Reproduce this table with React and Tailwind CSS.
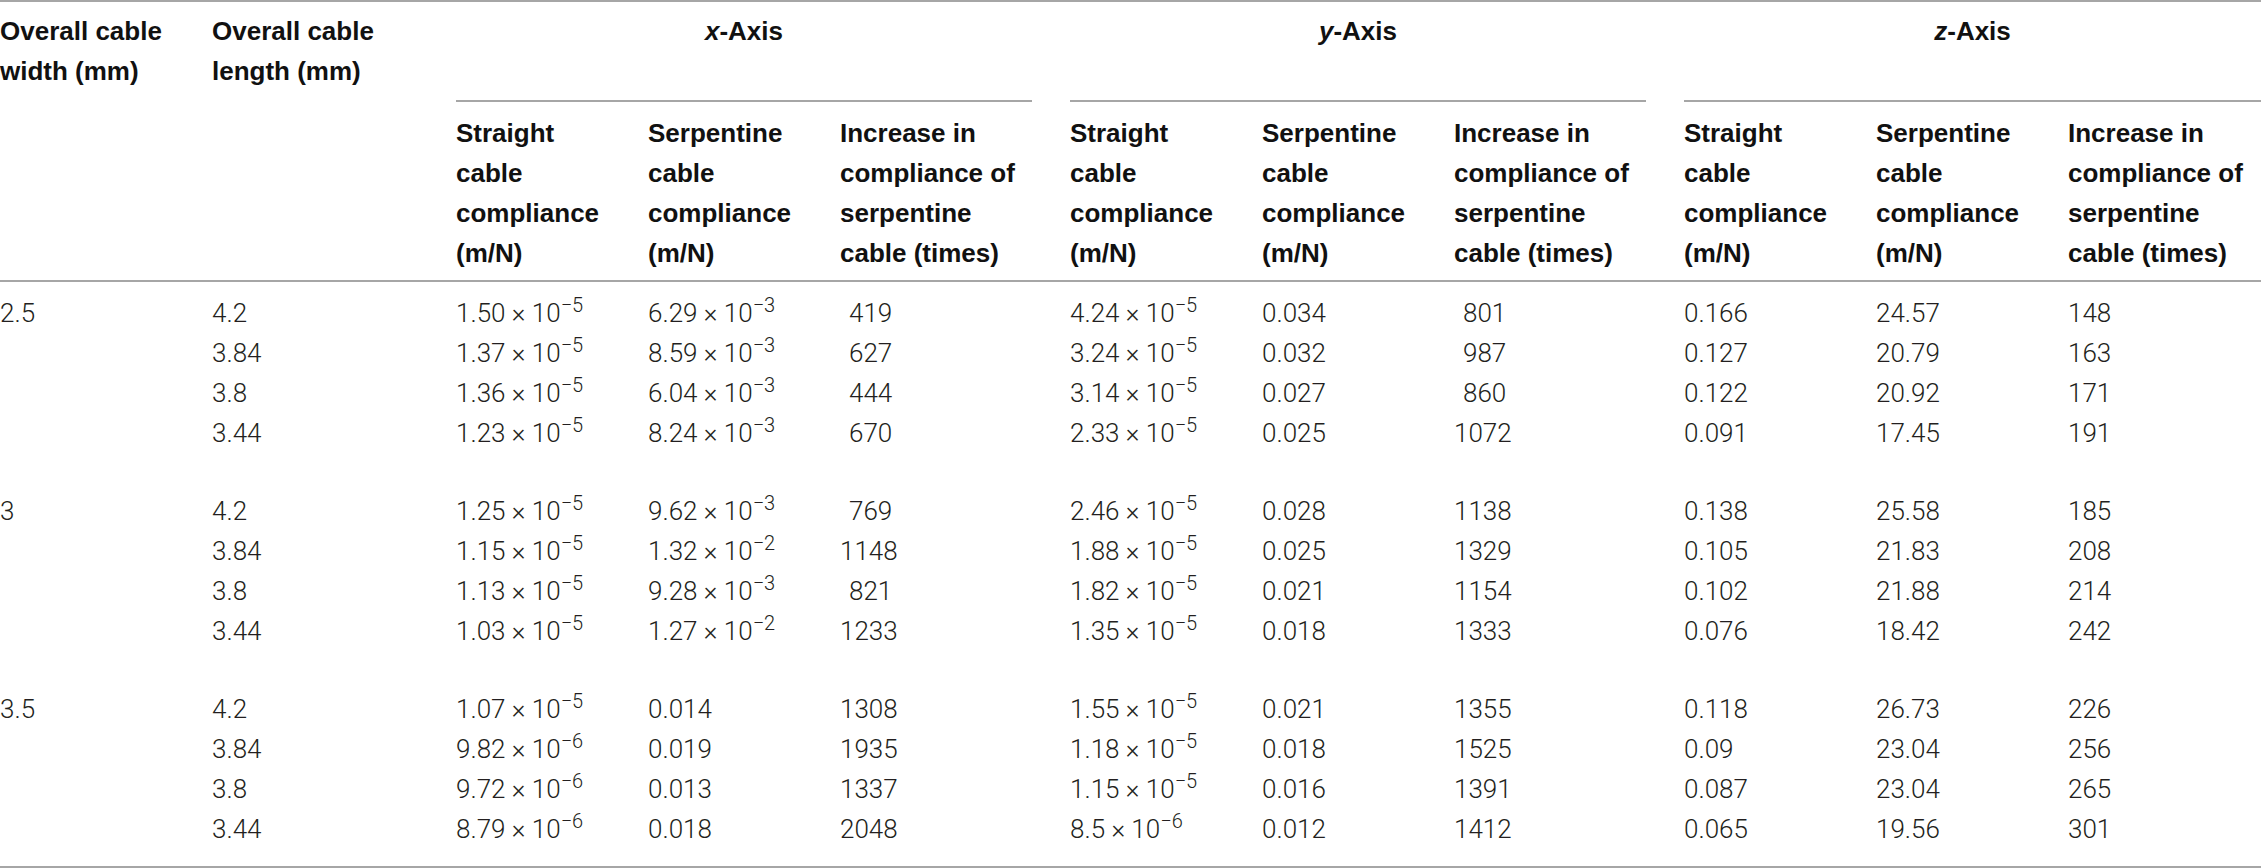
import React from "react";

const groups = [
  {
    width: "2.5",
    rows: [
      ["4.2", "1.50e-5", "6.29e-3", "419", "4.24e-5", "0.034", "801", "0.166", "24.57", "148"],
      ["3.84", "1.37e-5", "8.59e-3", "627", "3.24e-5", "0.032", "987", "0.127", "20.79", "163"],
      ["3.8", "1.36e-5", "6.04e-3", "444", "3.14e-5", "0.027", "860", "0.122", "20.92", "171"],
      ["3.44", "1.23e-5", "8.24e-3", "670", "2.33e-5", "0.025", "1072", "0.091", "17.45", "191"],
    ],
  },
  {
    width: "3",
    rows: [
      ["4.2", "1.25e-5", "9.62e-3", "769", "2.46e-5", "0.028", "1138", "0.138", "25.58", "185"],
      ["3.84", "1.15e-5", "1.32e-2", "1148", "1.88e-5", "0.025", "1329", "0.105", "21.83", "208"],
      ["3.8", "1.13e-5", "9.28e-3", "821", "1.82e-5", "0.021", "1154", "0.102", "21.88", "214"],
      ["3.44", "1.03e-5", "1.27e-2", "1233", "1.35e-5", "0.018", "1333", "0.076", "18.42", "242"],
    ],
  },
  {
    width: "3.5",
    rows: [
      ["4.2", "1.07e-5", "0.014", "1308", "1.55e-5", "0.021", "1355", "0.118", "26.73", "226"],
      ["3.84", "9.82e-6", "0.019", "1935", "1.18e-5", "0.018", "1525", "0.09", "23.04", "256"],
      ["3.8", "9.72e-6", "0.013", "1337", "1.15e-5", "0.016", "1391", "0.087", "23.04", "265"],
      ["3.44", "8.79e-6", "0.018", "2048", "8.5e-6", "0.012", "1412", "0.065", "19.56", "301"],
    ],
  },
];

const line = "border-[#a6a6a6]";

// "1.50e-5" -> 1.50 × 10⁻⁵
function Value({ v, indent }) {
  if (v.includes("e")) {
    const [m, exp] = v.split("e");
    return (
      <span>
        {m} × 10<sup className="text-[20px] -top-[0.5em]">{"\u2212" + exp.replace("-", "")}</sup>
      </span>
    );
  }
  return <span className={indent && v.length === 3 ? "pl-[9px]" : ""}>{v}</span>;
}

const labels = [
  ["Straight", "cable", "compliance", "(m/N)"],
  ["Serpentine", "cable", "compliance", "(m/N)"],
  ["Increase in", "compliance of", "serpentine", "cable (times)"],
];

function SubHead() {
  return (
    <>
      {labels.map((l, i) => (
        <th key={i} className={`border-b-2 ${line} pt-[11px] pb-[7px] text-left align-top font-bold`}>
          {l.map((t, j) => (
            <div key={j} className="whitespace-nowrap">{t}</div>
          ))}
        </th>
      ))}
    </>
  );
}

export default function App() {
  return (
    <div className="w-full bg-white">
      <table
        className={`w-full table-fixed border-separate border-spacing-0 border-t-2 border-b-2 ${line} text-[#231f20]`}
      >
        <colgroup>
          <col className="w-[212px]" />
          <col className="w-[244px]" />
          <col className="w-[192px]" />
          <col className="w-[192px]" />
          <col className="w-[192px]" />
          <col className="w-[38px]" />
          <col className="w-[192px]" />
          <col className="w-[192px]" />
          <col className="w-[192px]" />
          <col className="w-[38px]" />
          <col className="w-[192px]" />
          <col className="w-[192px]" />
          <col className="w-[193px]" />
        </colgroup>
        <thead className="font-['Liberation_Sans',Arial,sans-serif] text-[26px] leading-[40px] text-[#111]">
          <tr>
            <th rowSpan={2} className={`border-b-2 ${line} pt-[9px] text-left align-top font-bold`}>
              Overall cable
              <br />
              width (mm)
            </th>
            <th rowSpan={2} className={`border-b-2 ${line} pt-[9px] text-left align-top font-bold`}>
              Overall cable
              <br />
              length (mm)
            </th>
            <th colSpan={3} className={`border-b-2 ${line} h-[100px] pt-[9px] text-center align-top font-bold`}>
              <i>x</i>-Axis
            </th>
            <th rowSpan={2} className={`border-b-2 ${line}`}></th>
            <th colSpan={3} className={`border-b-2 ${line} pt-[9px] text-center align-top font-bold`}>
              <i>y</i>-Axis
            </th>
            <th rowSpan={2} className={`border-b-2 ${line}`}></th>
            <th colSpan={3} className={`border-b-2 ${line} pt-[9px] text-center align-top font-bold`}>
              <i>z</i>-Axis
            </th>
          </tr>
          <tr>
            <SubHead />
            <SubHead />
            <SubHead />
          </tr>
        </thead>
        <tbody className="font-['Roboto',sans-serif] font-light text-[26px] leading-[40px]">
          <tr>
            <td colSpan={13} className="h-[11px] p-0"></td>
          </tr>
          {groups.map((g, gi) => (
            <React.Fragment key={gi}>
              {g.rows.map((r, ri) => (
                <tr key={ri}>
                  <td className="h-[40px] whitespace-nowrap">{ri === 0 ? g.width : ""}</td>
                  {r.map((v, ci) => (
                    <React.Fragment key={ci}>
                      <td className="h-[40px] whitespace-nowrap">
                        <Value v={v} indent={ci === 3 || ci === 6} />
                      </td>
                      {(ci === 3 || ci === 6) && <td></td>}
                    </React.Fragment>
                  ))}
                </tr>
              ))}
              <tr>
                <td colSpan={13} className={gi < 2 ? "h-[38px]" : "h-[17px]"}></td>
              </tr>
            </React.Fragment>
          ))}
        </tbody>
      </table>
    </div>
  );
}
